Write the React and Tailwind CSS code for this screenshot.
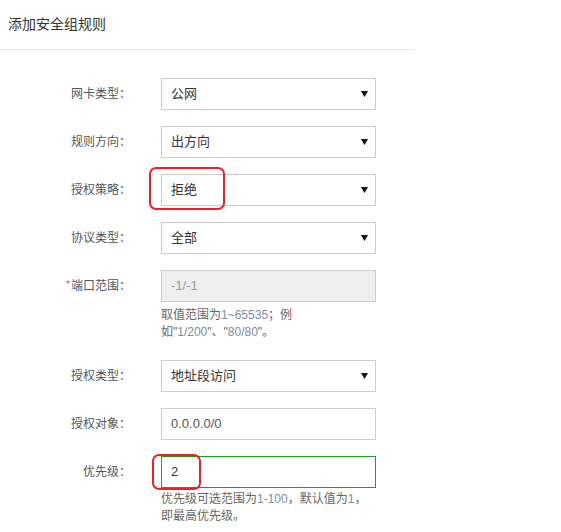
import React from "react";

const font = { fontFamily: '"Liberation Sans", "Noto Sans CJK SC", sans-serif' };

function Caret() {
  return (
    <svg width="7" height="6" viewBox="0 0 7 6" className="shrink-0">
      <path d="M0 0H7L3.5 6Z" fill="#111" />
    </svg>
  );
}

function Row({ label, required, children, className = "" }) {
  return (
    <div className={`flex items-center h-[32px] ${className}`}>
      <div className="w-[131px] shrink-0 text-right text-[12px] text-[#555] whitespace-nowrap">
        {required && <span className="text-[#f04060] text-[10px] align-top mr-[1px]">*</span>}
        {label}：
      </div>
      <div className="ml-[30px] w-[215px] h-full relative">{children}</div>
    </div>
  );
}

function Select({ value }) {
  return (
    <div className="h-full border border-[#ccc] bg-white flex items-center justify-between pl-[9px] pr-[7px] text-[13px] text-[#333]">
      <span>{value}</span>
      <Caret />
    </div>
  );
}

function Hint({ lines, className = "" }) {
  return (
    <div className={`ml-[161px] text-[12px] leading-[17px] text-[#666] ${className}`}>
      {lines.map((l, i) => (
        <div key={i}>{l}</div>
      ))}
    </div>
  );
}

function Mark({ className }) {
  return <div className={`absolute border-2 border-[#e8212b] rounded-[7px] ${className}`} />;
}

export default function App() {
  return (
    <div className="w-[561px] h-[532px] bg-white overflow-hidden" style={font}>
      {/* Header */}
      <div className="w-[414px] h-[50px] border-b border-[#e5e5e5] flex items-center pl-[8px] pb-[1px]">
        <h2 className="text-[14px] text-[#333]">添加安全组规则</h2>
      </div>

      {/* Form */}
      <div className="pt-[28px]">
        <Row label="网卡类型" className="mb-4">
          <Select value="公网" />
        </Row>
        <Row label="规则方向" className="mb-4">
          <Select value="出方向" />
        </Row>
        <Row label="授权策略" className="mb-4">
          <Select value="拒绝" />
          <Mark className="left-[-12px] top-[-7px] w-[76px] h-[43px]" />
        </Row>
        <Row label="协议类型" className="mb-4">
          <Select value="全部" />
        </Row>
        <Row label="端口范围" required>
          <div className="h-full border border-[#ccc] bg-[#eee] flex items-center pl-[9px] text-[13px] text-[#999]">
            -1/-1
          </div>
        </Row>
        <Hint
          className="mt-[5px] mb-[19px]"
          lines={[
            <>取值范围为<span className="text-[#7a8ca0]">1~65535</span>；例</>,
            <>如"<span className="text-[#7a8ca0]">1/200</span>"、"<span className="text-[#7a8ca0]">80/80</span>"。</>,
          ]}
        />
        <Row label="授权类型" className="mb-4">
          <Select value="地址段访问" />
        </Row>
        <Row label="授权对象" className="mb-4">
          <div className="h-full border border-[#ccc] bg-white flex items-center pl-[9px] text-[13px] text-[#555]">
            0.0.0.0/0
          </div>
        </Row>
        <Row label="优先级">
          <div className="h-full border border-[#229922] bg-white flex items-center pl-[9px] text-[13px] text-[#333]">
            2
          </div>
          <Mark className="left-[-9px] top-[-2px] w-[49px] h-[36px]" />
        </Row>
        <Hint
          className="mt-[3px]"
          lines={[
            <>优先级可选范围为<span className="text-[#7a8ca0]">1-100</span>，默认值为<span className="text-[#7a8ca0]">1</span>，</>,
            <>即最高优先级。</>,
          ]}
        />
      </div>
    </div>
  );
}
